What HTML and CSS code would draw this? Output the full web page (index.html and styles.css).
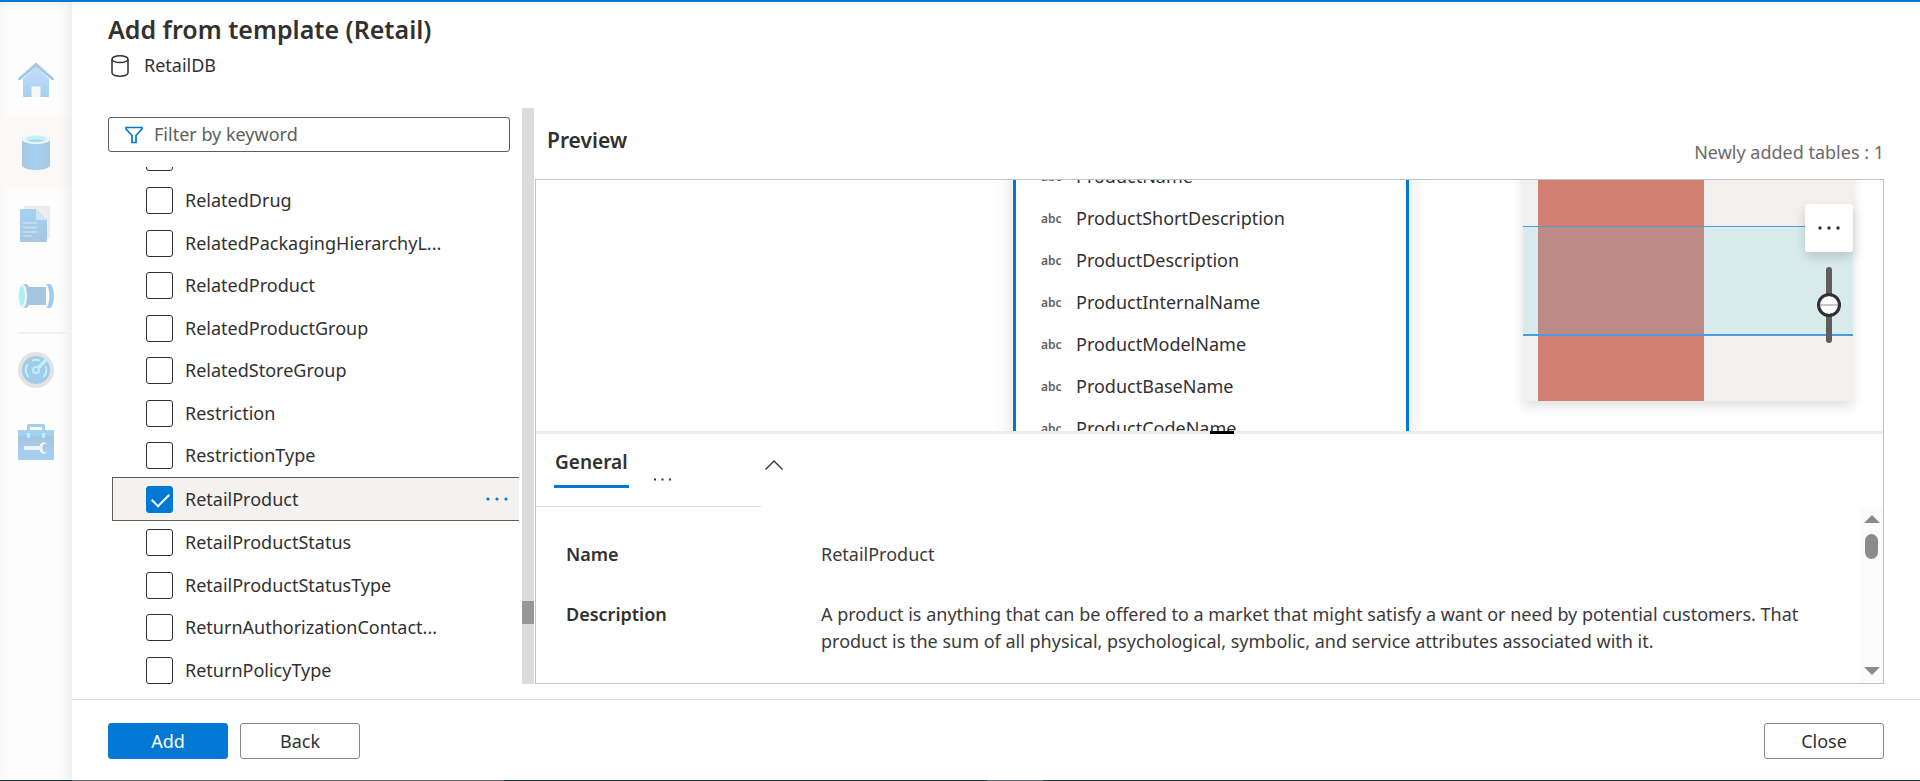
FILE: index.html
```html
<!DOCTYPE html>
<html lang="en">
<head>
<meta charset="utf-8">
<title>Add from template (Retail)</title>
<link rel="stylesheet" href="styles.css">
</head>
<body>
<div class="app">
  <nav class="rail" aria-label="Hubs">
    <a class="rail-item" href="#" aria-label="Home">
      <svg viewBox="0 0 36 36" width="36" height="36"><defs><linearGradient id="hg" x1="0" y1="0" x2="0" y2="1"><stop offset="0" stop-color="#c6ddf8"/><stop offset="1" stop-color="#a5d0f2"/></linearGradient></defs><path d="M5 17 18 4l13 13v17a1 1 0 0 1-1 1H6a1 1 0 0 1-1-1z" fill="url(#hg)"/><path d="M13.500 24.500h9V35h-9z" fill="#f6f6f6"/><path d="M18 .5 36 16.500v1.500h-2.500L18 4.500 2.500 18H0v-1.500z" fill="#a5c7e0"/></svg>
    </a>
    <a class="rail-item rail-item-active" href="#" aria-label="Data">
      <svg viewBox="0 0 36 36" width="36" height="36"><defs><linearGradient id="dg"><stop offset="0" stop-color="#a5c6e0"/><stop offset=".5" stop-color="#a5d2f3"/><stop offset="1" stop-color="#a5c6e0"/></linearGradient></defs><path d="M4 6v25c0 2.800 6 5 14 5s14-2.200 14-5V6z" fill="url(#dg)"/><ellipse cx="18" cy="5.500" rx="14" ry="4.500" fill="#f3f3f3"/><ellipse cx="18" cy="5" rx="10.500" ry="3.300" fill="#baf5fd"/><path d="M10 6.800c4-2 12-2 16 0-4 2-12 2-16 0z" fill="#a9dfea"/></svg>
    </a>
    <a class="rail-item" href="#" aria-label="Develop">
      <svg viewBox="0 0 36 36" width="36" height="36"><defs><linearGradient id="pg" x1="0" y1="0" x2="0" y2="1"><stop offset="0" stop-color="#a5d2f3"/><stop offset="1" stop-color="#a5c7e2"/></linearGradient></defs><path d="M6 0h26v33H6z" fill="#ececec"/><path d="M3 3h15l11 11v21a1 1 0 0 1-1 1H3a1 1 0 0 1-1-1V4a1 1 0 0 1 1-1z" fill="url(#pg)"/><path d="M18 3l11 11H18z" fill="#cfe3fb"/><path d="M5 17h14M5 21.500h14M5 26h14M5 30h9" stroke="#c9e0f8" stroke-width="1.500"/></svg>
    </a>
    <a class="rail-item" href="#" aria-label="Integrate">
      <svg viewBox="0 0 36 36" width="36" height="36"><path d="M4 6h4c1.500.5 2.500 2 3 3h17v18H11c-.5 1-1.500 2.500-3 3H4z" fill="#a5c5e0"/><path d="M28 6h4.500C34.500 8 36 12 36 18s-1.500 10-3.500 12H28c4-5 4-19 0-24z" fill="#a5cbec"/><path d="M27.500 6.500c4 5 4 18 0 23" fill="none" stroke="#f4f6f7" stroke-width="2"/><ellipse cx="4.500" cy="18" rx="4.500" ry="12" fill="#f4f6f7"/><ellipse cx="4" cy="18" rx="3" ry="10" fill="#b0eef6"/></svg>
    </a>
    <hr class="rail-divider">
    <a class="rail-item" href="#" aria-label="Monitor">
      <svg viewBox="0 0 36 36" width="36" height="36"><circle cx="18" cy="18" r="18" fill="#e3e3e3"/><circle cx="18" cy="18" r="14" fill="#a5c9e9"/><g fill="none" stroke="#baf3fc" stroke-width="2"><path d="M10.500 25a10.500 10.500 0 0 1-1-13M14 8.500a10.500 10.500 0 0 1 8 0M27.500 14a10.500 10.500 0 0 1-2 11"/><circle cx="18" cy="18" r="3"/><path d="M20 16l8-8" stroke-width="3.200"/></g></svg>
    </a>
    <a class="rail-item" href="#" aria-label="Manage">
      <svg viewBox="0 0 36 36" width="36" height="36"><defs><linearGradient id="tg" x1="0" y1="0" x2="0" y2="1"><stop offset="0" stop-color="#a5c5e0"/><stop offset="1" stop-color="#a5cff1"/></linearGradient></defs><path d="M9 7V1.500A1.500 1.500 0 0 1 10.500 0h15A1.500 1.500 0 0 1 27 1.500V7h-3V3H12v4z" fill="#a5cff0"/><path d="M1 6h34a1 1 0 0 1 1 1v28a1 1 0 0 1-1 1H1a1 1 0 0 1-1-1V7a1 1 0 0 1 1-1z" fill="#a5cff1"/><path d="M0 12h36v18H0z" fill="url(#tg)"/><path d="M9 9h3v5H9zM24 9h3v5h-3z" fill="#baf3fc"/><path d="M7 22h14.500a4.200 4.200 0 0 1 7.500-2h-3.500l-1.200 4 1.200 4H29a4.200 4.200 0 0 1-7.500-2H7a1 1 0 0 1-1-1v-2a1 1 0 0 1 1-1z" fill="#f3f3f3"/></svg>
    </a>
  </nav>

  <main class="panel">
    <header class="panel-head">
      <h1 class="panel-title">Add from template (Retail)</h1>
      <div class="database">
        <svg class="database-icon" viewBox="0 0 18 22" width="18" height="22" fill="none" stroke="#323130" stroke-width="1.500"><ellipse cx="9" cy="4.200" rx="8" ry="3.400"/><path d="M1 4.200v13.500c0 2 3.500 3.500 8 3.500s8-1.500 8-3.500V4.200"/></svg>
        <span>RetailDB</span>
      </div>
    </header>

    <div class="workspace">
      <section class="picker" aria-label="Tables">
        <label class="filter">
          <svg viewBox="0 0 18 18" width="18" height="18" fill="none" stroke="#0078d4" stroke-width="1.700"><path d="M1 1.500h16v1.500l-6 6.500V16.500H7V9.500L1 3z"/></svg>
          <input class="filter-input" type="text" placeholder="Filter by keyword" aria-label="Filter by keyword">
        </label>
        <ul class="tables">
          <li class="table-row"><label class="table-label"><input class="check" type="checkbox" aria-label="Previous table"></label></li>
          <li class="table-row"><label class="table-label"><input class="check" type="checkbox"><span>RelatedDrug</span></label></li>
          <li class="table-row"><label class="table-label"><input class="check" type="checkbox"><span>RelatedPackagingHierarchyL...</span></label></li>
          <li class="table-row"><label class="table-label"><input class="check" type="checkbox"><span>RelatedProduct</span></label></li>
          <li class="table-row"><label class="table-label"><input class="check" type="checkbox"><span>RelatedProductGroup</span></label></li>
          <li class="table-row"><label class="table-label"><input class="check" type="checkbox"><span>RelatedStoreGroup</span></label></li>
          <li class="table-row"><label class="table-label"><input class="check" type="checkbox"><span>Restriction</span></label></li>
          <li class="table-row"><label class="table-label"><input class="check" type="checkbox"><span>RestrictionType</span></label></li>
          <li class="table-row table-row-selected"><label class="table-label"><input class="check" type="checkbox" checked><span>RetailProduct</span></label>
            <button class="row-more" type="button" aria-label="More actions"><svg viewBox="0 0 22 4" width="22" height="4" fill="#0078d4"><circle cx="2" cy="2" r="1.600"/><circle cx="11" cy="2" r="1.600"/><circle cx="20" cy="2" r="1.600"/></svg></button></li>
          <li class="table-row"><label class="table-label"><input class="check" type="checkbox"><span>RetailProductStatus</span></label></li>
          <li class="table-row"><label class="table-label"><input class="check" type="checkbox"><span>RetailProductStatusType</span></label></li>
          <li class="table-row"><label class="table-label"><input class="check" type="checkbox"><span>ReturnAuthorizationContact...</span></label></li>
          <li class="table-row"><label class="table-label"><input class="check" type="checkbox"><span>ReturnPolicyType</span></label></li>
        </ul>
      </section>

      <div class="splitter"><div class="splitter-thumb"></div></div>

      <section class="preview">
        <div class="preview-head">
          <h2 class="preview-title">Preview</h2>
          <span class="preview-count">Newly added tables : 1</span>
        </div>
        <div class="preview-box">
          <div class="canvas">
            <ul class="node">
              <li class="column"><span class="column-type">abc</span>ProductName</li>
              <li class="column"><span class="column-type">abc</span>ProductShortDescription</li>
              <li class="column"><span class="column-type">abc</span>ProductDescription</li>
              <li class="column"><span class="column-type">abc</span>ProductInternalName</li>
              <li class="column"><span class="column-type">abc</span>ProductModelName</li>
              <li class="column"><span class="column-type">abc</span>ProductBaseName</li>
              <li class="column"><span class="column-type">abc</span>ProductCodeName</li>
            </ul>
            <div class="minimap">
              <div class="minimap-node"></div>
              <div class="minimap-view"></div>
            </div>
            <div class="canvas-tools">
              <button class="canvas-more" type="button" aria-label="More"><svg viewBox="0 0 22 4" width="22" height="4" fill="#323130"><circle cx="2" cy="2" r="1.700"/><circle cx="11" cy="2" r="1.700"/><circle cx="20" cy="2" r="1.700"/></svg></button>
              <input class="zoom" type="range" min="0" max="100" value="50" aria-label="Zoom">
            </div>
          </div>
          <div class="resizer"></div>
          <div class="details">
            <div class="tabs">
              <div class="tab-list">
                <button class="tab" type="button">General</button>
                <button class="tab-more" type="button" aria-label="More tabs"><svg viewBox="0 0 17 3" width="17" height="3" fill="#323130"><path d="M0 .5h2v2H0zM7.500 .5h2v2h-2zM15 .5h2v2h-2z"/></svg></button>
              </div>
              <button class="collapse" type="button" aria-label="Collapse"><svg viewBox="0 0 18 10" width="18" height="10" fill="none" stroke="#323130" stroke-width="1.400"><path d="M.5 9.500 9 1l8.500 8.500"/></svg></button>
            </div>
            <div class="details-body">
              <dl class="properties">
                <dt>Name</dt><dd>RetailProduct</dd>
                <dt>Description</dt><dd>A product is anything that can be offered to a market that might satisfy a want or need by potential customers. That product is the sum of all physical, psychological, symbolic, and service attributes associated with it.</dd>
              </dl>
              <div class="scrollbar">
                <svg viewBox="0 0 16 8" width="16" height="8"><path d="M8 0l8 8H0z" fill="#8b8b8b"/></svg>
                <div class="scrollbar-thumb"></div>
                <svg class="scrollbar-down" viewBox="0 0 16 8" width="16" height="8"><path d="M0 0h16L8 8z" fill="#8b8b8b"/></svg>
              </div>
            </div>
          </div>
        </div>
      </section>
    </div>

    <footer class="actions">
      <button class="button button-primary" type="button">Add</button>
      <button class="button" type="button">Back</button>
      <button class="button button-close" type="button">Close</button>
    </footer>
  </main>
</div>
<div class="bottom-edge"></div>
</body>
</html>
```
FILE: styles.css
```css
* { box-sizing: border-box; }

body {
  margin: 0;
  display: flex;
  flex-direction: column;
  height: 100vh;
  font-family: "Noto Sans", "Open Sans", sans-serif;
  font-size: 18px;
  line-height: 27px;
  color: #323130;
  background: #fff;
}

button, input { font: inherit; color: inherit; }
button { padding: 0; border: 0; background: none; }
svg { display: block; }
ul, dl, dd, h1, h2 { margin: 0; padding: 0; }
ul { list-style: none; }

.app {
  flex: 1;
  min-height: 0;
  display: flex;
  border-top: 2px solid #0078d4;
}
.bottom-edge {
  flex: none;
  height: 1px;
  background: linear-gradient(90deg, #1f3542 72px, #666 72px, #666 504px, #1f3542 504px, #1f3542 987px, #566874 987px, #566874 1043px, #1f3542 1043px);
}

/* Hub rail */
.rail {
  flex: none;
  width: 72px;
  padding-top: 42px;
  background: #fdfdfd;
  box-shadow: inset -14px 0 14px -12px #e6e6e6, inset 6px 6px 14px -6px #f3f3f3;
}
.rail-item {
  display: flex;
  align-items: center;
  justify-content: center;
  height: 72px;
}
.rail-item-active { background: linear-gradient(90deg, #faf9f8 85%, #efeeed); }
.rail-divider {
  height: 2px;
  margin: 0 0 0 18px;
  border: 0;
  background: #f1f1f1;
}

/* Panel */
.panel {
  flex: 1;
  min-width: 0;
  display: flex;
  flex-direction: column;
}
.panel-head { padding: 8px 36px 0; height: 106px; }
.panel-title {
  font-size: 25px;
  line-height: 38px;
  font-weight: 600;
}
.database {
  display: flex;
  align-items: center;
  gap: 15px;
  padding: 4px 0 0 3px;
}

.workspace {
  flex: 1;
  min-height: 0;
  display: flex;
  padding-right: 36px;
}

/* Table picker */
.picker {
  width: 450px;
  flex: none;
  display: flex;
  flex-direction: column;
}
.filter {
  flex: none;
  display: flex;
  align-items: center;
  gap: 11px;
  height: 35px;
  margin: 9px 12px 0 36px;
  padding: 0 16px;
  border: 1px solid #605e5c;
  border-radius: 3px;
}
.filter-input {
  flex: 1;
  min-width: 0;
  padding: 0;
  border: 0;
  outline: 0;
  background: none;
}
.filter-input::placeholder { color: #605e5c; opacity: 1; }

.tables {
  flex: 1;
  min-height: 0;
  margin: 15px 1px 0 40px;
  overflow: hidden;
}
.table-row {
  display: flex;
  align-items: center;
  justify-content: space-between;
  height: 42px;
  padding: 0 14px 0 34px;
}
.table-row:nth-child(even) { height: 43px; }
.table-row:first-child { margin-top: -31px; height: 43px; }
.table-row-selected,
.table-row-selected:nth-child(odd) {
  height: 44px;
  margin-right: 2px;
  padding: 0 11px 0 33px;
  border: 1px solid #605e5c;
  border-right: 0;
  background: #f3f2f1;
}
.table-label {
  display: flex;
  align-items: center;
  gap: 12px;
}
.check {
  appearance: none;
  flex: none;
  width: 27px;
  height: 27px;
  margin: 0;
  border: 1px solid #323130;
  border-radius: 3px;
  background: #fff;
}
.check:checked {
  border-color: #0078d4;
  background: #0078d4;
}
.check:checked::before {
  content: "";
  display: block;
  width: 15px;
  height: 8px;
  margin: 6px 0 0 5px;
  border: solid #fff;
  border-width: 0 0 2px 2px;
  transform: rotate(-45deg);
}

.splitter {
  flex: none;
  width: 12px;
  padding-top: 493px;
  background: #dcdcdc;
}
.splitter-thumb { height: 23px; background: #979797; }

/* Preview */
.preview {
  flex: 1;
  min-width: 0;
  margin-left: 1px;
  display: flex;
  flex-direction: column;
}
.preview-head {
  flex: none;
  display: flex;
  justify-content: space-between;
  height: 71px;
  padding: 19px 0 0 12px;
}
.preview-title {
  font-size: 21px;
  line-height: 27px;
  font-weight: 600;
}
.preview-count { padding-top: 12px; color: #6b6a68; }
.preview-box {
  flex: 1;
  min-height: 0;
  display: flex;
  flex-direction: column;
  border: 1px solid #c3c3c3;
}

.canvas {
  flex: 1;
  min-height: 0;
  position: relative;
  overflow: hidden;
}
.node {
  position: absolute;
  left: 477px;
  top: -25px;
  width: 396px;
  border: solid #0078d4;
  border-width: 0 3px;
  background: #fff;
  box-shadow: 0 6px 18px rgba(0, 0, 0, .13);
}
.column {
  display: flex;
  align-items: center;
  height: 42px;
  padding-left: 25px;
}
.column-type {
  width: 35px;
  font-size: 12px;
  font-weight: 600;
  color: #605e5c;
}

.minimap {
  position: absolute;
  right: 30px;
  top: -80px;
  width: 330px;
  height: 301px;
  background: #f2f1ef;
  box-shadow: 0 5px 12px rgba(0, 0, 0, .13);
}
.minimap-node {
  width: 166px;
  height: 100%;
  margin-left: 15px;
  background: #d07f71;
}
.minimap-view {
  position: absolute;
  left: 0;
  right: 0;
  top: 126px;
  height: 110px;
  border: solid #4a9ce0;
  border-width: 1px 0 2px;
  background: rgba(92, 204, 239, .16);
}
.canvas-tools {
  position: absolute;
  right: 30px;
  top: 24px;
  width: 48px;
  display: flex;
  flex-direction: column;
  align-items: center;
  gap: 15px;
}
.canvas-more {
  display: flex;
  align-items: center;
  justify-content: center;
  width: 48px;
  height: 48px;
  border-radius: 3px;
  background: #fff;
  box-shadow: 0 5px 12px rgba(0, 0, 0, .16);
}
.zoom {
  appearance: none;
  writing-mode: vertical-lr;
  width: 24px;
  height: 76px;
  margin: 0;
  background: none;
}
.zoom::-webkit-slider-runnable-track {
  width: 6px;
  border-radius: 3px;
  background: #605e5c;
}
.zoom::-webkit-slider-thumb {
  appearance: none;
  width: 24px;
  height: 24px;
  margin-left: -9px;
  border: 3px solid #323130;
  border-radius: 50%;
  background: linear-gradient(#fff 8px, #c8c6c4 8px, #c8c6c4 10px, #fff 10px) padding-box;
}

.resizer {
  flex: none;
  height: 3px;
  padding-left: 50%;
  background: #ededed;
}
.resizer::before {
  content: "";
  display: block;
  width: 24px;
  height: 3px;
  background: #000;
}

/* Details */
.details {
  flex: none;
  height: 249px;
  display: flex;
  flex-direction: column;
}
.tabs {
  flex: none;
  display: flex;
  gap: 4px;
  height: 73px;
}
.tab-list {
  display: flex;
  align-items: flex-start;
  gap: 25px;
  width: 225px;
  padding: 15px 0 0 18px;
  border-bottom: 1px solid #dcdcdc;
}
.tab {
  height: 39px;
  padding: 0 1px 9px;
  border-bottom: 3px solid #0078d4;
  font-size: 19px;
  font-weight: 600;
}
.tab-more { padding-top: 29px; }
.collapse { align-self: flex-start; padding-top: 26px; }

.details-body {
  flex: 1;
  min-height: 0;
  display: flex;
}
.properties {
  flex: 1;
  display: grid;
  grid-template-columns: 255px 1fr;
  align-content: start;
  row-gap: 33px;
  padding: 34px 24px 0 30px;
}
.properties dt { font-weight: 600; }
.properties dd { color: #3b3a39; }
.scrollbar {
  flex: none;
  width: 23px;
  display: flex;
  flex-direction: column;
  align-items: center;
  gap: 11px;
  padding: 8px 0;
  background: #fbfbfb;
}
.scrollbar-thumb {
  width: 13px;
  height: 25px;
  border-radius: 7px;
  background: #8b8b8b;
}
.scrollbar-down { margin-top: auto; }

/* Footer */
.actions {
  flex: none;
  display: flex;
  gap: 12px;
  margin-top: 15px;
  padding: 23px 36px 21px;
  border-top: 1px solid #dcdcdc;
}
.button {
  width: 120px;
  height: 36px;
  border: 1px solid #8a8886;
  border-radius: 3px;
  background: #fff;
}
.button-primary {
  border-color: #0078d4;
  background: #0078d4;
  color: #fff;
}
.button-close { margin-left: auto; }
```
